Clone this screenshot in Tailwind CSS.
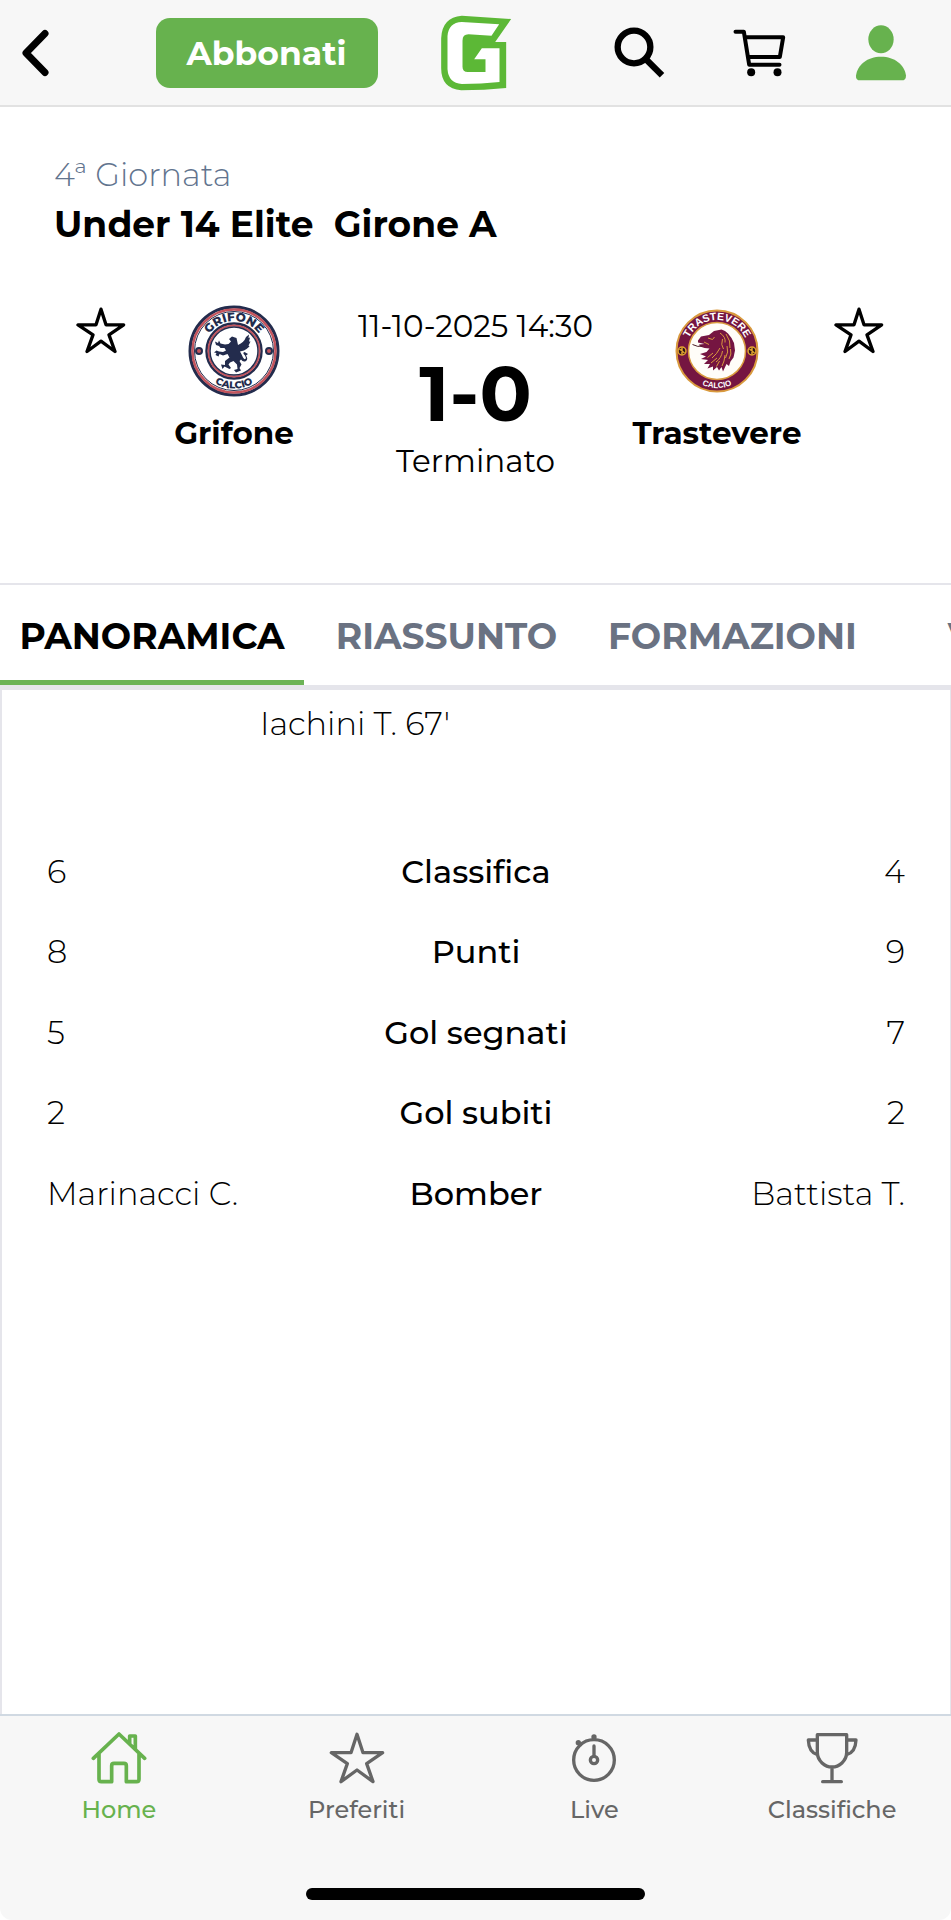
<!DOCTYPE html>
<html lang="it">
<head>
  <meta charset="UTF-8" />
  <meta name="viewport" content="width=device-width, initial-scale=1.0"/>
  <title>Grifone - Trastevere</title>
  <script src="https://cdn.jsdelivr.net/npm/@tailwindcss/browser@4"></script>
</head>
<body class="bg-white text-black font-['Montserrat','Inter',sans-serif]">
<div class="min-h-screen flex flex-col overflow-hidden">

  <!-- Header -->
  <header class="h-[107px] grid grid-cols-[1fr_auto_1fr] items-center bg-[#f7f7f7] border-b-2 border-[#e2e2e2]">
    <div class="flex items-center justify-between pl-[22px] pr-[62px]">
      <button aria-label="Indietro">
        <svg class="w-7 h-12" viewBox="0 0 28 48" fill="none" stroke="#000" stroke-width="7" stroke-linecap="round" stroke-linejoin="round"><path d="M23 4.500 4 24l19 19.500"/></svg>
      </button>
      <button class="w-[222px] h-[70px] rounded-[14px] bg-[#67b24e] text-white text-[33px] leading-10 font-bold">Abbonati</button>
    </div>
    <a href="#" aria-label="Gazzetta">
      <svg class="w-[72px] h-[76px]" viewBox="58 45 213 228">
        <path fill="#5cb836" d="M122 47 270 57 222 126H255V264Q190 271 120 271Q60 266 60 205V115Q62 52 122 47Z"/>
        <path fill="#fff" d="M122 66 234 73 211 107 142 103Q124 103 124 122V200Q124 216 140 216H193V178H159L182 145H235V246Q180 252 122 252Q82 250 79 208V108Q82 68 122 66Z"/>
      </svg>
    </a>
    <div class="flex items-center justify-between pl-[102px] pr-11">
      <button aria-label="Cerca">
        <svg class="w-[51px] h-[51px]" viewBox="571 81 151 153" fill="none" stroke="#000" stroke-width="19"><circle cx="630" cy="141" r="49"/><path d="M665 177 714 226"/></svg>
      </button>
      <button aria-label="Carrello">
        <svg class="w-[53px] h-12" viewBox="922 86 158 144" fill="none" stroke="#000" stroke-width="12" stroke-linecap="round" stroke-linejoin="round"><path d="M929 94H954L970 193H1061M959 111H1072L1062 170H967"/><circle cx="976" cy="216" r="12" fill="#000" stroke="none"/><circle cx="1055" cy="216" r="12" fill="#000" stroke="none"/></svg>
      </button>
      <button aria-label="Profilo">
        <svg class="w-[52px] h-14" viewBox="1285 74 154 168" fill="#67b24e"><ellipse cx="1362" cy="117" rx="38" ry="42"/><path d="M1300 240Q1286 240 1287 226C1291 193 1321 169 1362 169S1433 193 1437 226Q1437 240 1424 240Z"/></svg>
      </button>
    </div>
  </header>

  <!-- Partita -->
  <section class="h-[476px] pt-[46px]">
    <div class="px-[54px]">
      <p class="text-[32px] leading-[44px] font-light text-slate-500">4ª Giornata</p>
      <h1 class="text-[36px] leading-[54px] font-bold whitespace-pre">Under 14 Elite  Girone A</h1>
    </div>

    <div class="grid grid-cols-[94px_172px_1fr_172px_112px] pl-[54px] pr-9 mt-[54px]">
      <button aria-label="Segui Grifone" class="self-start justify-self-center mt-0.5">
        <svg class="w-[50px] h-[47px]" viewBox="78 83 150 140" fill="none" stroke="#000" stroke-width="10" stroke-linejoin="round"><path d="M153 89 168 136H221L177 166L195 216L153 185L111 216L129 166L84 136H138Z"/></svg>
      </button>

      <div class="flex flex-col items-center">
        <svg class="w-[92px] h-[92px]" viewBox="0 0 184 184" aria-label="Stemma Grifone">
          <circle cx="92" cy="92" r="88" fill="#fff" stroke="#232c4d" stroke-width="6"/>
          <circle cx="92" cy="92" r="83" fill="none" stroke="#c3545d" stroke-width="5"/>
          <circle cx="92" cy="92" r="79" fill="none" stroke="#232c4d" stroke-width="2"/>
          <circle cx="92" cy="92" r="55" fill="none" stroke="#232c4d" stroke-width="5"/>
          <circle cx="92" cy="92" r="51" fill="none" stroke="#c3545d" stroke-width="4"/>
          <circle cx="92" cy="92" r="48" fill="none" stroke="#232c4d" stroke-width="3"/>
          <circle cx="22" cy="92" r="6" fill="#c3545d" stroke="#232c4d" stroke-width="4"/>
          <circle cx="162" cy="92" r="6" fill="#c3545d" stroke="#232c4d" stroke-width="4"/>
          <path id="g-top" fill="none" d="M32 92A60 60 0 0 1 152 92"/>
          <path id="g-bot" fill="none" d="M17 92A75 75 0 0 0 167 92"/>
          <g fill="#232c4d" font-size="24" font-weight="800" text-anchor="middle">
            <text><textPath href="#g-top" startOffset="50%">GRIFONE</textPath></text>
            <text font-size="20"><textPath href="#g-bot" startOffset="50%">CALCIO</textPath></text>
          </g>
          <!-- grifone -->
          <path fill="#232c4d" d="M82 68 88 63 97 66 100 80Q112 75 116 64L122 59 121 66 124 65 122 73 125 73 121 81 123 83 117 88 112 91 104 93Q108 100 110 105Q114 111 116 106L114 101Q108 96 113 94L120 98 116 101Q121 108 116 112Q110 115 106 109L103 112 107 119 103 126 106 131 96 135 92 130 99 128 98 119 91 112 84 115 81 119 86 126 83 128 73 123 69 128 66 119 74 120 74 112 83 105 79 98 70 101 63 98 61 103 55 100 57 96 52 95 57 91 62 93 70 94 76 91 73 86 65 86 62 82 56 80 54 73 60 76 62 71 65 77 74 79 81 78 86 73Z"/>
        </svg>
        <span class="mt-4 text-[31px] leading-10 font-bold">Grifone</span>
      </div>

      <div class="text-center whitespace-nowrap">
        <p class="text-[31px] leading-[42px]">11-10-2025 14:30</p>
        <p class="text-[77px] leading-[92px] font-bold">1-0</p>
        <p class="text-[31px] leading-[44px]">Terminato</p>
      </div>

      <div class="flex flex-col items-center">
        <svg class="w-[92px] h-[92px]" viewBox="0 0 184 184" aria-label="Stemma Trastevere">
          <circle cx="92" cy="92" r="81" fill="#751541" stroke="#d99a3e" stroke-width="4"/>
          <circle cx="92" cy="92" r="57" fill="#fffdf8" stroke="#d99a3e" stroke-width="3"/>
          <circle cx="22" cy="92" r="8" fill="#2e1418" stroke="#e3a52f" stroke-width="3"/>
          <circle cx="162" cy="92" r="8" fill="#2e1418" stroke="#e3a52f" stroke-width="3"/>
          <path stroke="#e3a52f" stroke-width="3" fill="none" d="M17 88 27 96M22 85V99M157 88 167 96M162 85V99"/>
          <path id="t-top" fill="none" d="M30 92A62 62 0 0 1 154 92"/>
          <path id="t-bot" fill="none" d="M18 92A74 74 0 0 0 166 92"/>
          <g fill="#fff" font-size="21" font-weight="800" text-anchor="middle" font-family="Liberation Sans, sans-serif">
            <text><textPath href="#t-top" startOffset="50%">TRASTEVERE</textPath></text>
            <text font-size="16"><textPath href="#t-bot" startOffset="50%">CALCIO</textPath></text>
          </g>
          <!-- leone -->
          <path fill="#751541" d="M54 71 60 63 76 60 86 52 101 49 108 52 114 57 121 66 126 76 128 91 125 105 119 113 116 122 111 118 104 133 101 124 96 131 92 124 84 131 84 123 73 127 78 118 66 118 74 110 60 108 70 103 58 98 71 94 77 87 67 86 58 83 56 79 67 78 54 75Z"/>
          <path fill="none" stroke="#4a1a25" stroke-width="2" d="M63 82Q54 85 43 79"/>
          <path fill="none" stroke="#d99a3e" stroke-width="2" d="M98 56Q110 64 108 75M110 58Q120 72 118 86M103 68Q99 80 105 88M112 82Q116 94 109 106M119 88Q122 98 116 108M98 86Q92 98 82 106M103 92Q101 106 90 114M108 100Q107 113 102 122M84 96 73 105M92 106 80 116M74 66 83 69 87 64M66 74 76 79M97 112 91 123"/>
        </svg>
        <span class="mt-4 text-[31px] leading-10 font-bold">Trastevere</span>
      </div>

      <button aria-label="Segui Trastevere" class="self-start justify-self-center mt-0.5">
        <svg class="w-[50px] h-[47px]" viewBox="78 83 150 140" fill="none" stroke="#000" stroke-width="10" stroke-linejoin="round"><path d="M153 89 168 136H221L177 166L195 216L153 185L111 216L129 166L84 136H138Z"/></svg>
      </button>
    </div>
  </section>

  <!-- Tab -->
  <nav class="flex overflow-hidden border-t-2 border-b-5 border-[#e5e5eb] text-[36px] leading-[44px] font-bold text-gray-500">
    <a href="#" class="w-[304px] shrink-0 pt-[29px] pb-[22px] text-center border-b-5 border-[#6cb356] text-black">PANORAMICA</a>
    <a href="#" class="w-[285px] shrink-0 pt-[29px] text-center">RIASSUNTO</a>
    <a href="#" class="w-[287px] shrink-0 pt-[29px] text-center">FORMAZIONI</a>
    <a href="#" class="w-[266px] shrink-0 pt-[29px] text-center">VIDEO</a>
  </nav>

  <!-- Panoramica -->
  <main class="flex-1 border-l-2 border-r border-[#e5e5eb] pt-3">
    <div class="grid grid-cols-2 text-[32px] leading-[44px] font-light">
      <p class="text-right pr-[26px]">Iachini T. 67'</p>
    </div>

    <table class="w-full mt-[85px] text-[32px] leading-10 font-light table-fixed">
      <tbody>
        <tr class="h-[81px]">
          <td class="pl-[45px]">6</td>
          <th scope="row" class="font-medium">Classifica</th>
          <td class="pr-[45px] text-right">4</td>
        </tr>
        <tr class="h-[80px]">
          <td class="pl-[45px]">8</td>
          <th scope="row" class="font-medium">Punti</th>
          <td class="pr-[45px] text-right">9</td>
        </tr>
        <tr class="h-[81px]">
          <td class="pl-[45px]">5</td>
          <th scope="row" class="font-medium">Gol segnati</th>
          <td class="pr-[45px] text-right">7</td>
        </tr>
        <tr class="h-[80px]">
          <td class="pl-[45px]">2</td>
          <th scope="row" class="font-medium">Gol subiti</th>
          <td class="pr-[45px] text-right">2</td>
        </tr>
        <tr class="h-[81px]">
          <td class="pl-[45px]">Marinacci C.</td>
          <th scope="row" class="font-medium">Bomber</th>
          <td class="pr-[45px] text-right">Battista T.</td>
        </tr>
      </tbody>
    </table>
  </main>

  <!-- Menu in basso -->
  <footer class="h-[206px] flex flex-col items-center justify-between bg-[#f7f7f7] border-t-2 border-[#d0d9e2] rounded-b-[12px] pt-4 pb-5">
    <nav class="w-full grid grid-cols-4 text-[24px] leading-8 font-medium text-[#666]">
      <a href="#" class="flex flex-col items-center gap-2.5 text-[#67b24e]">
        <svg class="w-14 h-[52px]" viewBox="272 95 168 156" fill="none" stroke="currentColor" stroke-width="11" stroke-linecap="round" stroke-linejoin="round"><path d="M279 174 356 101 433 174M296 161V237Q296 244 303 244H334V196Q334 189 341 189H371Q378 189 378 196V244H409Q416 244 416 237V161M388 128V107H405V145"/></svg>
        Home
      </a>
      <a href="#" class="flex flex-col items-center gap-2.5">
        <svg class="w-14 h-[52px]" viewBox="984 95 168 156" fill="none" stroke="currentColor" stroke-width="10" stroke-linejoin="round"><path d="M1068 102 1086 157H1145L1097 190L1116 244L1068 209L1020 244L1039 190L991 157H1050Z"/></svg>
        Preferiti
      </a>
      <a href="#" class="flex flex-col items-center gap-2.5">
        <svg class="w-14 h-[52px]" viewBox="294 95 168 156" fill="none" stroke="currentColor" stroke-width="10" stroke-linecap="round"><circle cx="378" cy="179" r="61"/><circle cx="378" cy="179" r="11"/><path d="M378 168V137"/><circle cx="378" cy="110" r="8" fill="currentColor" stroke="none"/><circle cx="331" cy="127" r="8" fill="currentColor" stroke="none"/><path stroke-width="8" d="M378 110V118M331 127 338 134"/></svg>
        Live
      </a>
      <a href="#" class="flex flex-col items-center gap-2.5">
        <svg class="w-14 h-[52px]" viewBox="1006 95 168 156" fill="none" stroke="currentColor" stroke-width="10" stroke-linecap="round" stroke-linejoin="round"><path d="M1046 103H1134V156C1134 182 1111 200 1090 200S1046 182 1046 156ZM1090 200V244M1062 244H1118M1046 119H1019C1020 144 1028 158 1046 163M1134 119H1162C1161 144 1153 158 1134 163"/></svg>
        Classifiche
      </a>
    </nav>
    <div class="w-[339px] h-3 rounded-full bg-black"></div>
  </footer>

</div>
</body>
</html>
